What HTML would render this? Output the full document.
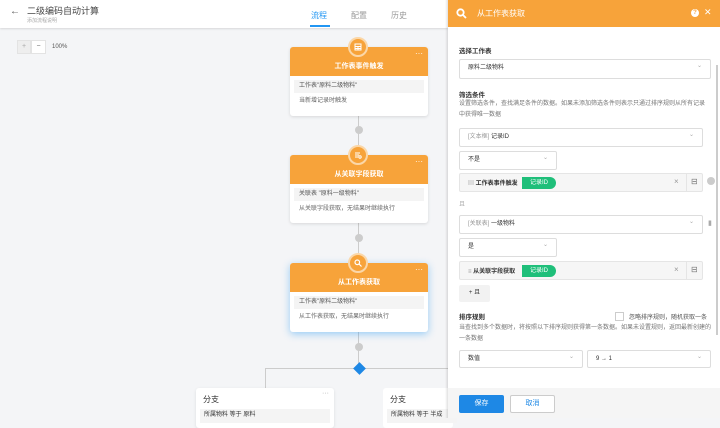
<!DOCTYPE html><html><head><meta charset="utf-8"><style>
*{box-sizing:border-box;margin:0;padding:0}
body{width:720px;height:418px;overflow:hidden;background:#f4f5f7;font-family:"Liberation Sans","Noto Sans CJK SC",sans-serif;font-size:7px;color:#333;position:relative}
.a{position:absolute}
.hdr{left:0;top:0;width:448px;height:28px;background:#fff;box-shadow:0 1px 2px rgba(0,0,0,.12)}
.node{position:absolute;left:290px;width:138px;background:#fff;border-radius:3px;box-shadow:0 1px 3px rgba(0,0,0,.12)}
.nh{height:29px;background:#f7a33a;border-radius:3px 3px 0 0;color:#fff;font-weight:bold;font-size:7px;text-align:center;padding-top:14px}
.l1{margin:4px 4px 0;background:#f4f4f4;height:13px;line-height:13px;padding-left:5px;font-size:6px;color:#555}
.l2{margin:0 4px;height:17px;line-height:17px;padding-left:5px;font-size:6px;color:#666}
.ic{position:absolute;left:58px;top:-10px;width:20px;height:20px;border-radius:50%;background:#f7a33a;border:2px solid #fbd7a8}
.ic svg{position:absolute;left:4px;top:4px}
.plus{position:absolute;left:355px;width:8px;height:8px;border-radius:50%;background:#ccc}
.dots{position:absolute;right:5px;top:2px;color:#fff;font-size:8px}
.sel{position:absolute;background:#fff;border:1px solid #ddd;border-radius:2px;height:19px;line-height:17px;padding-left:8px;font-size:6px;color:#333}
.sel:after{content:"⌄";position:absolute;right:8px;top:-2px;color:#aaa}
.t{position:absolute;font-size:6.5px;font-weight:bold;color:#333}
.d{position:absolute;font-size:6px;color:#777;line-height:11px}
.fld{position:absolute;background:#f6f6f6;border:1px solid #e5e5e5;border-radius:2px;height:19px}
.tag{position:absolute;top:3px;height:12px;background:#1fbf7a;color:#fff;font-size:6px;line-height:12px;padding:0 8px;border-radius:0 7px 7px 0}
</style></head><body>
<div class="a hdr"></div>
<div class="a" style="left:10px;top:6px;font-size:10px;color:#555">←</div>
<div class="a" style="left:27px;top:4px;font-size:9px;color:#444;font-weight:normal">二级编码自动计算</div>
<div class="a" style="left:27px;top:17px;font-size:5px;color:#aaa">添加流程说明</div>
<div class="a" style="left:311px;top:10px;font-size:8px;color:#2196f3">流程</div>
<div class="a" style="left:310px;top:25px;width:20px;height:2px;background:#2196f3"></div>
<div class="a" style="left:351px;top:10px;font-size:8px;color:#999">配置</div>
<div class="a" style="left:391px;top:10px;font-size:8px;color:#999">历史</div>
<div class="a" style="left:17px;top:40px;width:14px;height:14px;background:#eee;border:1px solid #e3e3e3;color:#aaa;text-align:center;line-height:12px">+</div>
<div class="a" style="left:31px;top:40px;width:15px;height:14px;background:#fff;border:1px solid #e3e3e3;color:#666;text-align:center;line-height:12px">−</div>
<div class="a" style="left:52px;top:44px;font-size:6px;color:#555">100%</div>
<div class="a" style="left:358px;top:116px;width:1px;height:40px;background:#ccc"></div>
<div class="a" style="left:358px;top:222px;width:1px;height:42px;background:#ccc"></div>
<div class="a" style="left:358px;top:332px;width:1px;height:36px;background:#ccc"></div>
<div class="a" style="left:265px;top:368px;width:183px;height:1px;background:#ccc"></div>
<div class="a" style="left:265px;top:368px;width:1px;height:22px;background:#ccc"></div>
<div class="plus" style="top:126px"></div><div class="plus" style="top:234px"></div><div class="plus" style="top:343px"></div>
<div class="a" style="left:355px;top:364px;width:9px;height:9px;background:#1e88e5;transform:rotate(45deg)"></div>
<div class="node" style="top:47px;height:69px"><div class="ic"><svg width="8" height="8" viewBox="0 0 8 8" fill="none" stroke="#fff" stroke-width="1"><rect x="1" y="1" width="6" height="6"/><path d="M1 3.5h6M1 5.5h6M4 3.5v3.5"/></svg></div><div class="nh">工作表事件触发</div><div class="dots">···</div><div class="l1">工作表"原料二级物料"</div><div class="l2">当新增记录时触发</div></div>
<div class="node" style="top:155px;height:68px"><div class="ic"><svg width="8" height="8" viewBox="0 0 8 8" fill="none" stroke="#fff" stroke-width="1"><path d="M1 2h5M1 4h4M1 6h3"/><circle cx="6" cy="6" r="1.2"/></svg></div><div class="nh">从关联字段获取</div><div class="dots">···</div><div class="l1">关联表 "原料一级物料"</div><div class="l2">从关联字段获取，无结果时继续执行</div></div>
<div class="node" style="top:263px;height:69px;box-shadow:0 2px 8px rgba(33,150,243,.45)"><div class="ic"><svg width="8" height="8" viewBox="0 0 8 8" fill="none" stroke="#fff" stroke-width="1.2"><circle cx="3.3" cy="3.3" r="2.3"/><path d="M5 5l2.5 2.5"/></svg></div><div class="nh">从工作表获取</div><div class="dots">···</div><div class="l1">工作表"原料二级物料"</div><div class="l2">从工作表获取，无结果时继续执行</div></div>
<div class="a" style="left:196px;top:388px;width:138px;height:40px;background:#fff;border-radius:3px;box-shadow:0 1px 3px rgba(0,0,0,.1)"><div class="a" style="left:7px;top:6px;font-size:8px">分支</div><div class="a" style="right:5px;top:2px;color:#aaa">···</div><div class="a" style="left:4px;top:21px;width:130px;height:14px;background:#f4f4f4;font-size:6px;padding-left:4px;line-height:12px">所属物料 等于 原料</div></div>
<div class="a" style="left:383px;top:388px;width:70px;height:40px;background:#fff;border-radius:3px"><div class="a" style="left:7px;top:6px;font-size:8px">分支</div><div class="a" style="left:4px;top:21px;width:70px;height:14px;background:#f4f4f4;font-size:6px;padding-left:4px;line-height:12px;white-space:nowrap">所属物料 等于 半成</div></div>
<div class="a" style="left:445px;top:0;width:3px;height:418px;background:linear-gradient(90deg,rgba(0,0,0,0),rgba(0,0,0,.12))"></div>
<div class="a" style="left:448px;top:0;width:272px;height:418px;background:#fff"></div>
<div class="a" style="left:448px;top:0;width:272px;height:27px;background:#f7a33a"></div>
<svg class="a" style="left:456px;top:8px" width="11" height="11" viewBox="0 0 11 11" fill="none" stroke="#fff" stroke-width="1.8"><circle cx="4.5" cy="4.5" r="3.2"/><path d="M7 7l3 3"/></svg>
<div class="a" style="left:477px;top:8px;color:#fff;font-size:8px">从工作表获取</div>
<div class="a" style="left:691px;top:9px;width:8px;height:8px;border-radius:50%;background:#fff;color:#f7a33a;font-size:6px;text-align:center;line-height:8px;font-weight:bold">?</div>
<div class="a" style="left:704px;top:7px;color:#fff;font-size:9px">✕</div>
<div class="a" style="left:716px;top:65px;width:2px;height:270px;background:#ccc"></div>
<div class="t" style="left:459px;top:45px">选择工作表</div>
<div class="sel" style="left:459px;top:59px;width:252px;height:20px">原料二级物料</div>
<div class="t" style="left:459px;top:89px">筛选条件</div>
<div class="d" style="left:459px;top:99px;width:250px">设置筛选条件，查找满足条件的数据。如果未添加筛选条件则表示只通过排序规则从所有记录中获得唯一数据</div>
<div class="sel" style="left:459px;top:128px;width:244px;color:#333"><span style="color:#999">[文本框]</span> 记录ID</div>
<div class="sel" style="left:459px;top:151px;width:98px">不是</div>
<div class="fld" style="left:459px;top:173px;width:244px"><span class="a" style="left:8px;top:4px;font-size:6px;font-weight:bold;color:#333"><span style="color:#999">▤</span> 工作表事件触发</span><span class="tag" style="left:62px">记录ID</span><span class="a" style="left:214px;top:3px;color:#999;font-size:8px">×</span><span class="a" style="left:226px;top:0;width:1px;height:17px;background:#e5e5e5"></span><span class="a" style="left:231px;top:3px;color:#777;font-size:8px">⊟</span></div>
<div class="a" style="left:707px;top:177px;width:8px;height:8px;border-radius:50%;background:#ccc"></div>
<div class="a" style="left:459px;top:199px;font-size:6px;color:#aaa">且</div>
<div class="sel" style="left:459px;top:215px;width:244px"><span style="color:#999">[关联表]</span> 一级物料</div>
<div class="a" style="left:708px;top:219px;color:#aaa;font-size:7px">▮</div>
<div class="sel" style="left:459px;top:238px;width:98px">是</div>
<div class="fld" style="left:459px;top:261px;width:244px"><span class="a" style="left:8px;top:4px;font-size:6px;font-weight:bold;color:#333"><span style="color:#999">≡</span> 从关联字段获取</span><span class="tag" style="left:62px">记录ID</span><span class="a" style="left:214px;top:3px;color:#999;font-size:8px">×</span><span class="a" style="left:226px;top:0;width:1px;height:17px;background:#e5e5e5"></span><span class="a" style="left:231px;top:3px;color:#777;font-size:8px">⊟</span></div>
<div class="a" style="left:459px;top:285px;width:31px;height:17px;background:#f2f2f2;border-radius:2px;font-size:6px;text-align:center;line-height:17px">+ 且</div>
<div class="t" style="left:459px;top:311px">排序规则</div>
<div class="a" style="left:615px;top:312px;width:9px;height:9px;border:1px solid #ccc;background:#fff"></div>
<div class="a" style="left:629px;top:312px;font-size:6px;color:#555">忽略排序规则，随机获取一条</div>
<div class="d" style="left:459px;top:323px;width:252px">当查找到多个数据时，将按照以下排序规则获得第一条数据。如果未设置规则，返回最新创建的一条数据</div>
<div class="sel" style="left:459px;top:350px;width:124px;height:18px">数值</div>
<div class="sel" style="left:587px;top:350px;width:124px;height:18px">9 → 1</div>
<div class="a" style="left:448px;top:388px;width:272px;height:30px;background:#f5f5f5"></div>
<div class="a" style="left:459px;top:395px;width:45px;height:18px;background:#1e88e5;border-radius:2px;color:#fff;font-size:7px;text-align:center;line-height:18px">保存</div>
<div class="a" style="left:510px;top:395px;width:45px;height:18px;background:#fff;border:1px solid #ccc;border-radius:2px;color:#1e88e5;font-size:7px;text-align:center;line-height:16px">取消</div>
</body></html>
